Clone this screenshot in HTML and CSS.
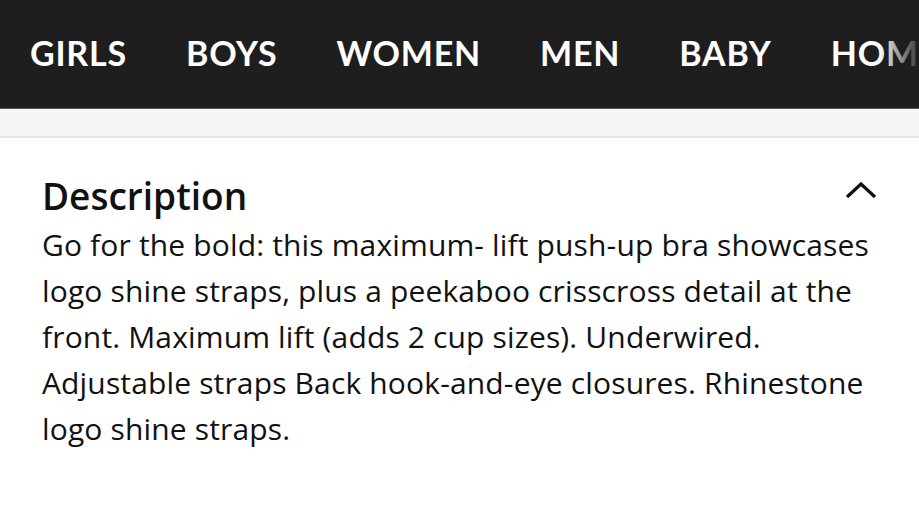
FILE: index.html
```html
<!DOCTYPE html>
<html>
<head>
<meta charset="utf-8">
<link rel="stylesheet" href="styles.css">
</head>
<body>
<nav class="topnav">
  <ul class="nav-list">
    <li class="nav-item">GIRLS</li>
    <li class="nav-item">BOYS</li>
    <li class="nav-item">WOMEN</li>
    <li class="nav-item">MEN</li>
    <li class="nav-item">BABY</li>
    <li class="nav-item">HOME</li>
  </ul>
  <div class="nav-fade"></div>
</nav>
<div class="sub-strip"></div>
<section class="desc">
  <div class="desc-head">
    <h2 class="desc-title">Description</h2>
    <svg class="chevron" width="32" height="18" viewBox="0 0 32 18"><path d="M2 16 L16 3 L30 16" fill="none" stroke="#111" stroke-width="3.2"/></svg>
  </div>
  <p class="desc-text">Go for the bold: this maximum- lift push-up bra showcases logo shine straps, plus a peekaboo crisscross detail at the front. Maximum lift (adds 2 cup sizes). Underwired. Adjustable straps Back hook-and-eye closures. Rhinestone logo shine straps.</p>
</section>
</body>
</html>
```
FILE: styles.css
```css
* { box-sizing: border-box; }
html, body { margin: 0; padding: 0; background: #fff; }
body { font-family: "Open Sans", Lato, sans-serif; color: #111; width: 919px; overflow: hidden; }
.topnav { position: relative; height: 109px; background: #1e1e1e; border-bottom: 1px solid #5a5a5a; overflow: hidden; }
.nav-list { list-style: none; margin: 0; padding: 0 0 0 30px; display: flex; gap: 59px; height: 108px; align-items: center; white-space: nowrap; }
.nav-item { font-family: Lato, sans-serif; color: #fff; font-size: 34px; font-weight: 700; letter-spacing: 0.8px; padding-bottom: 4px; }
.nav-fade { position: absolute; top: 0; right: 0; width: 40px; height: 108px; background: linear-gradient(to right, rgba(30,30,30,0), rgba(30,30,30,0.9) 100%); }
.sub-strip { height: 29px; background: #f5f5f5; border-bottom: 2px solid #e6e6e6; }
.desc { padding: 36px 30px 0 42px; }
.desc-head { display: flex; justify-content: space-between; align-items: center; height: 42px; }
.desc-title { margin: 0; font-size: 37px; font-weight: 600; color: #111; }
.chevron { margin-right: 12px; margin-top: -10px; }
.desc-text { margin: 6px 0 0 0; font-size: 30px; letter-spacing: 0.15px; line-height: 46px; color: #111; }
```
